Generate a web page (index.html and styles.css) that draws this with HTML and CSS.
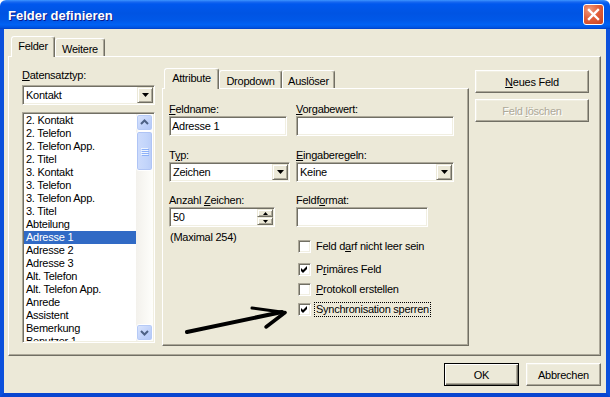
FILE: index.html
```html
<!DOCTYPE html>
<html lang="de">
<head>
<meta charset="utf-8">
<title>Felder definieren</title>
<link rel="stylesheet" href="styles.css">
</head>
<body>
<div class="window">
  <div class="titlebar">
    <span class="title">Felder definieren</span>
    <div class="close">
      <svg width="13" height="13" viewBox="0 0 13 13"><path d="M2 2 L11 11 M11 2 L2 11" stroke="#fff" stroke-width="2.4" stroke-linecap="square" fill="none"/></svg>
    </div>
  </div>
  <div class="client">
    <div class="tabs outer-tabs">
      <div class="tab active tab-felder">Felder</div>
      <div class="tab tab-weitere">Weitere</div>
    </div>
    <div class="panel outer-panel">
      <div class="left-col">
        <div class="lbl lbl-top"><u>D</u>atensatztyp:</div>
        <div class="combo combo-type">
          <span class="combo-text">Kontakt</span>
          <span class="combo-btn"><svg width="7" height="4" viewBox="0 0 7 4"><path d="M0 0 H7 L3.5 4 Z" fill="#000"/></svg></span>
        </div>
        <div class="listbox">
          <ul class="items">
            <li class="item">2. Kontakt</li>
            <li class="item">2. Telefon</li>
            <li class="item">2. Telefon App.</li>
            <li class="item">2. Titel</li>
            <li class="item">3. Kontakt</li>
            <li class="item">3. Telefon</li>
            <li class="item">3. Telefon App.</li>
            <li class="item">3. Titel</li>
            <li class="item">Abteilung</li>
            <li class="item selected">Adresse 1</li>
            <li class="item">Adresse 2</li>
            <li class="item">Adresse 3</li>
            <li class="item">Alt. Telefon</li>
            <li class="item">Alt. Telefon App.</li>
            <li class="item">Anrede</li>
            <li class="item">Assistent</li>
            <li class="item">Bemerkung</li>
            <li class="item">Benutzer 1</li>
          </ul>
          <div class="vscroll">
            <div class="sb-btn"><svg width="15" height="15" viewBox="0 0 15 15"><path d="M4 9 L7.5 5.5 L11 9" stroke="#4D6185" stroke-width="2" fill="none"/></svg></div>
            <div class="sb-thumb">
              <span class="grip"></span><span class="grip"></span><span class="grip"></span><span class="grip"></span>
            </div>
            <div class="sb-track"></div>
            <div class="sb-btn"><svg width="15" height="15" viewBox="0 0 15 15"><path d="M4 6 L7.5 9.5 L11 6" stroke="#4D6185" stroke-width="2" fill="none"/></svg></div>
          </div>
        </div>
      </div>

      <div class="mid-col">
        <div class="tabs inner-tabs">
          <div class="tab active tab-attr">Attribute</div>
          <div class="tab tab-drop">Dropdown</div>
          <div class="tab tab-ausl">Auslöser</div>
        </div>
        <div class="panel inner-panel">
          <div class="form">
            <div class="field">
              <div class="lbl"><u>F</u>eldname:</div>
              <div class="input w-name">Adresse 1</div>
            </div>
            <div class="field">
              <div class="lbl"><u>V</u>orgabewert:</div>
              <div class="input w-wide"></div>
            </div>
            <div class="field row-b">
              <div class="lbl">T<u>y</u>p:</div>
              <div class="combo w-typ">
                <span class="combo-text">Zeichen</span>
                <span class="combo-btn"><svg width="7" height="4" viewBox="0 0 7 4"><path d="M0 0 H7 L3.5 4 Z" fill="#000"/></svg></span>
              </div>
            </div>
            <div class="field row-b">
              <div class="lbl"><u>E</u>ingaberegeln:</div>
              <div class="combo w-wide">
                <span class="combo-text">Keine</span>
                <span class="combo-btn"><svg width="7" height="4" viewBox="0 0 7 4"><path d="M0 0 H7 L3.5 4 Z" fill="#000"/></svg></span>
              </div>
            </div>
            <div class="field row-c">
              <div class="lbl">Anzahl <u>Z</u>eichen:</div>
              <div class="spin">
                <span class="spin-text">50</span>
                <span class="spin-btns">
                  <span class="spin-btn"><svg width="5" height="3" viewBox="0 0 5 3"><path d="M0 3 H5 L2.5 0 Z" fill="#000"/></svg></span>
                  <span class="spin-btn"><svg width="5" height="3" viewBox="0 0 5 3"><path d="M0 0 H5 L2.5 3 Z" fill="#000"/></svg></span>
                </span>
              </div>
            </div>
            <div class="field row-c">
              <div class="lbl">Feldf<u>o</u>rmat:</div>
              <div class="input w-fmt"></div>
            </div>
            <div class="note">(Maximal 254)</div>
            <div class="checks">
              <div class="check c1"><span class="box"></span><span class="ctext">Feld d<u>a</u>rf nicht leer sein</span></div>
              <div class="check c2"><span class="box"><svg width="7" height="7" viewBox="0 0 7 7"><path d="M0 2 L2 4 L6 0 V3 L2 7 L0 5 Z" fill="#000"/></svg></span><span class="ctext">P<u>r</u>imäres Feld</span></div>
              <div class="check c3"><span class="box"></span><span class="ctext"><u>P</u>rotokoll erstellen</span></div>
              <div class="check c3"><span class="box"><svg width="7" height="7" viewBox="0 0 7 7"><path d="M0 2 L2 4 L6 0 V3 L2 7 L0 5 Z" fill="#000"/></svg></span><span class="ctext focus">Synchronisation sperren</span></div>
            </div>
          </div>
        </div>
      </div>

      <div class="right-col">
        <div class="btn btn-side"><span><u>N</u>eues Feld</span></div>
        <div class="btn btn-side btn-disabled"><span>Feld <u>l</u>öschen</span></div>
      </div>
    </div>
    <div class="footer">
      <div class="btn btn-foot btn-default">OK</div>
      <div class="btn btn-foot">Abbrechen</div>
    </div>
  </div>
  <svg class="annotation" width="610" height="397" viewBox="0 0 610 397">
    <path d="M187 332 L282 312" stroke="#000" stroke-width="4" stroke-linecap="round" fill="none"/>
    <path d="M252 308 L285 312.5" stroke="#000" stroke-width="3" stroke-linecap="round" fill="none"/>
    <path d="M266 327 L285 312.5" stroke="#000" stroke-width="3.5" stroke-linecap="round" fill="none"/>
  </svg>
</div>
</body>
</html>
```

FILE: styles.css
```css
* { box-sizing: border-box; }
html, body { margin: 0; padding: 0; }
body {
  width: 610px;
  height: 397px;
  overflow: hidden;
  background: #fff;
  font-family: "Liberation Sans", Arial, sans-serif;
  font-size: 11px;
  letter-spacing: -0.25px;
  color: #000;
}
u { text-decoration: underline; text-underline-offset: 1px; }

.window {
  position: relative;
  width: 610px;
  height: 397px;
  display: flex;
  flex-direction: column;
}

/* title bar */
.titlebar {
  height: 29px;
  flex: none;
  display: flex;
  align-items: center;
  justify-content: space-between;
  padding: 0 6px 0 8px;
  border-radius: 6px 6px 0 0;
  background: linear-gradient(to bottom, #3D95FF 0, #1868F0 2px, #0058EE 4px, #0054E3 45%, #0058E8 70%, #0062F4 85%, #0056E4 94%, #0040C8 100%);
}
.title {
  color: #fff;
  font-weight: bold;
  font-size: 13px;
  letter-spacing: 0;
  text-shadow: 1px 1px 0 #0A1A8C;
  margin-top: 1px;
}
.close {
  width: 21px;
  height: 21px;
  border: 1px solid #fff;
  border-radius: 3px;
  background: radial-gradient(circle at 30% 25%, #F19A7C 0, #E2603C 45%, #C8401E 100%);
  display: flex;
  align-items: center;
  justify-content: center;
}

/* client area */
.client {
  flex: 1;
  background: #ECE9D8;
  border: 4px solid #0B50DC;
  border-top: 0;
  border-bottom-color: #0845D0;
  padding: 7px 5px 0 4px;
  display: flex;
  flex-direction: column;
}

/* tabs */
.tabs { display: flex; align-items: flex-end; }
.tab {
  height: 18px;
  padding-top: 2px;
  border: 1px solid;
  border-bottom: 0;
  border-color: #fff #716F64 transparent #fff;
  border-radius: 3px 3px 0 0;
  box-shadow: inset -1px 0 #ACA899;
  background: #ECE9D8;
  display: flex;
  align-items: center;
  justify-content: center;
}
.tab.active {
  height: 21px;
  padding-top: 0;
  padding-bottom: 2px;
  margin-bottom: -1px;
  position: relative;
  z-index: 1;
}
.outer-tabs { height: 20px; padding-left: 3px; }
.tab-felder { width: 44px; }
.tab-weitere { width: 50px; }
.inner-tabs { height: 20px; padding-left: 2px; }
.tab-attr { width: 55px; }
.tab-drop { width: 63px; }
.tab-ausl { width: 53px; }

.panel {
  border: 1px solid;
  border-color: #fff #716F64 #716F64 #fff;
  box-shadow: inset -1px -1px #ACA899;
  background: #ECE9D8;
}
.outer-panel {
  height: 300px;
  display: flex;
  align-items: flex-start;
  padding: 11px 0 0 13px;
}

/* left column */
.left-col { width: 133px; display: flex; flex-direction: column; }
.lbl { line-height: 13px; height: 13px; white-space: nowrap; }
.lbl-top { margin-top: 1px; }

.combo {
  height: 20px;
  display: flex;
  align-items: center;
  background: #fff;
  border: 1px solid;
  border-color: #ACA899 #fff #fff #ACA899;
  box-shadow: inset 1px 1px #716F64, inset -1px -1px #F1EFE2;
  padding: 1px;
}
.combo-type { margin-top: 3px; }
.combo-text { flex: 1; padding-left: 2px; line-height: 16px; }
.combo-btn, .spin-btn {
  background: #ECE9D8;
  border: 1px solid;
  border-color: #ECE9D8 #716F64 #716F64 #ECE9D8;
  box-shadow: inset 1px 1px #fff, inset -1px -1px #ACA899;
  display: flex;
  align-items: center;
  justify-content: center;
}
.combo-btn { width: 16px; height: 16px; }

.listbox {
  margin-top: 7px;
  height: 231px;
  display: flex;
  background: #fff;
  border: 1px solid;
  border-color: #ACA899 #fff #fff #ACA899;
  box-shadow: inset 1px 1px #716F64, inset -1px -1px #F1EFE2;
  padding: 1px;
}
.items {
  list-style: none;
  margin: 0;
  padding: 0;
  flex: 1;
  overflow: hidden;
}
.item { height: 13px; line-height: 13px; padding-left: 2px; white-space: nowrap; }
.item.selected { background: #316AC5; color: #fff; }

.vscroll {
  width: 17px;
  display: flex;
  flex-direction: column;
  background: linear-gradient(to right, #F3F1EC, #FEFEFB);
}
.sb-btn {
  height: 17px;
  border: 1px solid #fff;
  border-radius: 3px;
  background: linear-gradient(135deg, #DCE6FD, #BFD1FA 60%, #B2C7F7);
  box-shadow: inset 0 0 0 1px #B6CAF6;
  display: flex;
  align-items: center;
  justify-content: center;
}
.sb-thumb {
  height: 40px;
  border: 1px solid #fff;
  border-radius: 3px;
  background: linear-gradient(to right, #CEDCFC, #C3D5FB 60%, #BACDF8);
  box-shadow: inset 0 0 0 1px #AFC4F5;
  display: flex;
  flex-direction: column;
  align-items: center;
  justify-content: center;
  gap: 1px;
}
.grip { width: 7px; height: 1px; background: #EEF4FE; box-shadow: 1px 1px #8CB0F8; }
.sb-track { flex: 1; }

/* middle column */
.mid-col { width: 307px; margin-left: 7px; display: flex; flex-direction: column; }
.inner-panel {
  height: 258px;
  padding: 14px 0 0 6px;
}
.form {
  display: grid;
  grid-template-columns: 121px 158px;
  column-gap: 6px;
  align-items: start;
}
.row-b { margin-top: 13px; }
.row-c { margin-top: 12px; }

.input {
  height: 20px;
  background: #fff;
  border: 1px solid;
  border-color: #ACA899 #fff #fff #ACA899;
  box-shadow: inset 1px 1px #716F64, inset -1px -1px #F1EFE2;
  padding: 0 2px;
  display: flex;
  align-items: center;
}
.w-name { width: 118px; }
.w-wide { width: 158px; }
.w-typ { width: 121px; }
.w-fmt { width: 132px; }

.spin {
  width: 106px;
  height: 20px;
  display: flex;
  align-items: center;
  background: #fff;
  border: 1px solid;
  border-color: #ACA899 #fff #fff #ACA899;
  box-shadow: inset 1px 1px #716F64, inset -1px -1px #F1EFE2;
  padding: 1px;
}
.spin-text { flex: 1; padding-left: 2px; }
.spin-btns { width: 16px; height: 16px; display: flex; flex-direction: column; }
.spin-btn { height: 8px; }

.note { margin-top: 4px; line-height: 13px; padding-left: 1px; }
.checks { margin-top: 13px; display: flex; flex-direction: column; padding-left: 2px; }
.check { display: flex; align-items: center; height: 13px; }
.c2 { margin-top: 10px; }
.c3 { margin-top: 7px; }
.box {
  width: 13px;
  height: 13px;
  flex: none;
  background: #fff;
  border: 1px solid;
  border-color: #ACA899 #fff #fff #ACA899;
  box-shadow: inset 1px 1px #716F64, inset -1px -1px #F1EFE2;
  display: flex;
  align-items: center;
  justify-content: center;
}
.ctext { margin-left: 5px; line-height: 13px; white-space: nowrap; }
.focus { outline: 1px dotted #000; outline-offset: 0; padding: 0 1px; margin-left: 4px; }

/* right column */
.right-col { width: 114px; margin-left: 6px; margin-top: 2px; display: flex; flex-direction: column; gap: 6px; }

.btn {
  height: 23px;
  background: #ECE9D8;
  border: 1px solid;
  border-color: #fff #716F64 #716F64 #fff;
  box-shadow: inset -1px -1px #ACA899, inset 1px 1px #F1EFE2;
  display: flex;
  align-items: center;
  justify-content: center;
  white-space: nowrap;
}
.btn-disabled { color: #ACA899; text-shadow: 1px 1px 0 #fff; }
.btn-default {
  border-color: #000;
  box-shadow: inset 1px 1px #fff, inset -1px -1px #716F64, inset -2px -2px #ACA899;
}

.footer {
  margin-top: 7px;
  display: flex;
  justify-content: flex-end;
  gap: 7px;
}
.btn-foot { width: 75px; }

.annotation { position: absolute; left: 0; top: 0; pointer-events: none; }
```
